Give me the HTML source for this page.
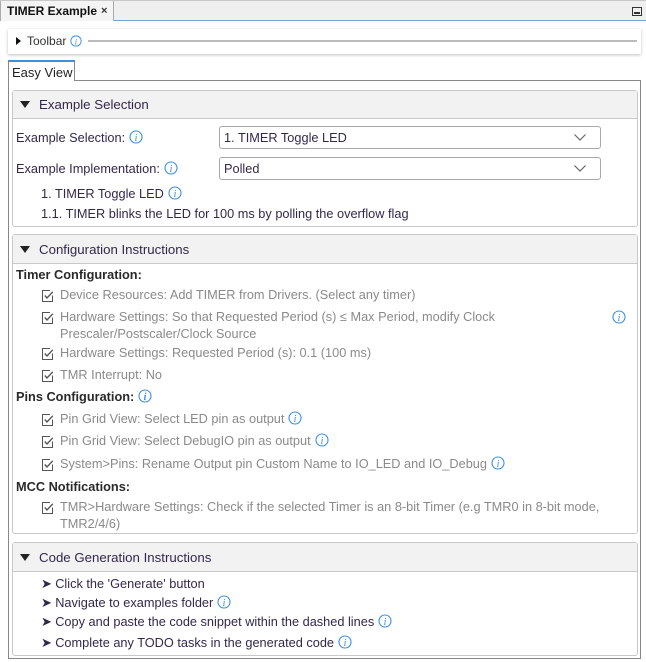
<!DOCTYPE html>
<html><head><meta charset="utf-8"><style>
*{margin:0;padding:0;box-sizing:border-box}
body{width:646px;height:662px;background:#fff;font-family:"Liberation Sans",sans-serif;font-size:12.75px;color:#33284a;position:relative;overflow:hidden}
.a{position:absolute;white-space:nowrap;line-height:16px}
.g{color:#8a8a8a}
.b{font-weight:bold;color:#2a2a2a}
.sec{position:absolute;left:12px;width:626px;border:1px solid #c8c8c8;border-radius:3px;background:#fff}
.hd{position:absolute;left:0;top:0;right:0;background:#f2f2f2;border-bottom:1px solid #c8c8c8}
.hd .t{position:absolute;left:26px;font-size:13.25px;color:#33284a;line-height:16px}
.tri{position:absolute;left:7px;width:0;height:0;border-left:5px solid transparent;border-right:5px solid transparent;border-top:7px solid #222}
.combo{position:absolute;left:219px;width:382px;height:23px;border:1px solid #a8a8a8;border-radius:3px;background:#fff}
.combo span{position:absolute;left:4px;top:3px;line-height:16px}
.combo svg{position:absolute;right:14px;top:7px}
.i{display:inline-block;vertical-align:-2px;margin-left:4px}
.cb{position:absolute;width:12px;height:12px}
</style></head><body>
<svg width="0" height="0" style="position:absolute"><defs>
<symbol id="inf" viewBox="0 0 14 14"><circle cx="7" cy="7" r="6" fill="none" stroke="#3b8fe0" stroke-width="1.1"/><text x="7" y="10.8" font-family="Liberation Serif" font-style="italic" font-size="10" fill="#3b8fe0" text-anchor="middle">i</text></symbol>
<symbol id="chk" viewBox="0 0 12 12"><path d="M10.5 5.5V11.5H0.5V0.5H8" fill="none" stroke="#555" stroke-width="1"/><path d="M2.8 5.5L5 8L10.8 1.8" fill="none" stroke="#555" stroke-width="1.4"/></symbol>
</defs></svg>

<div style="position:absolute;left:0;top:0;width:646px;height:21px;background:#efefef;border-top:1px solid #c8c8c8"></div>
<div style="position:absolute;left:0;top:20px;width:646px;height:1px;background:#7ea4cc"></div>
<div style="position:absolute;left:0;top:1px;width:114px;height:20px;background:#f4f4f4;border-right:1px solid #aaa;border-left:1px solid #aaa"></div>
<div class="a b" style="left:7px;top:3px;font-size:12px;color:#111">TIMER Example</div>
<div class="a" style="left:101px;top:3px;font-size:11px;font-weight:bold;color:#333">×</div>
<div style="position:absolute;left:632px;top:7px;width:10px;height:9px;border:1px solid #333"><div style="position:absolute;left:1px;top:4px;width:6px;height:2px;background:#333"></div></div>

<div style="position:absolute;left:8px;top:29px;width:633px;height:25px;background:#fff;box-shadow:0 1px 3px rgba(0,0,0,.25)"></div>
<div style="position:absolute;left:16px;top:37px;width:0;height:0;border-top:4px solid transparent;border-bottom:4px solid transparent;border-left:5px solid #111"></div>
<div class="a" style="left:27px;top:33px;font-size:12px;color:#333">Toolbar<svg class="i" width="12" height="12"><use href="#inf"/></svg></div>
<div style="position:absolute;left:88px;top:40px;width:549px;height:2px;background:#bbb"></div>

<div style="position:absolute;left:8px;top:80px;width:633px;height:579px;border:1px solid #888"></div>
<div style="position:absolute;left:8px;top:60px;width:67px;height:21px;background:#fff;border:1px solid #888;border-bottom:none;border-top:2px solid #3b8fe0"></div>
<div class="a" style="left:12px;top:65px;font-size:13px;color:#222">Easy View</div>

<div class="sec" style="top:90px;height:137px">
 <div class="hd" style="height:28px"><div class="tri" style="top:10px"></div><div class="t" style="top:6px">Example Selection</div></div>
</div>
<div class="a" style="left:16px;top:130px">Example Selection:<svg class="i" width="14" height="14"><use href="#inf"/></svg></div>
<div class="combo" style="top:126px"><span>1. TIMER Toggle LED</span><svg width="12" height="7"><path d="M0.5 0.5L6 6L11.5 0.5" fill="none" stroke="#666" stroke-width="1.2"/></svg></div>
<div class="a" style="left:16px;top:161px">Example Implementation:<svg class="i" width="14" height="14"><use href="#inf"/></svg></div>
<div class="combo" style="top:157px"><span>Polled</span><svg width="12" height="7"><path d="M0.5 0.5L6 6L11.5 0.5" fill="none" stroke="#666" stroke-width="1.2"/></svg></div>
<div class="a" style="left:41px;top:186px">1. TIMER Toggle LED<svg class="i" width="14" height="14"><use href="#inf"/></svg></div>
<div class="a" style="left:41px;top:206px">1.1. TIMER blinks the LED for 100 ms by polling the overflow flag</div>

<div class="sec" style="top:234px;height:300px">
 <div class="hd" style="height:29px"><div class="tri" style="top:11px"></div><div class="t" style="top:7px">Configuration Instructions</div></div>
</div>
<div class="a b" style="left:16px;top:267px">Timer Configuration:</div>
<svg class="cb" style="left:42px;top:290px"><use href="#chk"/></svg><div class="a g" style="left:60px;top:287px">Device Resources: Add TIMER from Drivers. (Select any timer)</div>
<svg class="cb" style="left:42px;top:312px"><use href="#chk"/></svg><div class="a g" style="left:60px;top:309px">Hardware Settings: So that Requested Period (s) ≤ Max Period, modify Clock</div>
<div class="a g" style="left:60px;top:326px">Prescaler/Postscaler/Clock Source</div>
<svg style="position:absolute;left:612px;top:310px" width="14" height="14"><use href="#inf"/></svg>
<svg class="cb" style="left:42px;top:348px"><use href="#chk"/></svg><div class="a g" style="left:60px;top:345px">Hardware Settings: Requested Period (s): 0.1 (100 ms)</div>
<svg class="cb" style="left:42px;top:370px"><use href="#chk"/></svg><div class="a g" style="left:60px;top:367px">TMR Interrupt: No</div>
<div class="a b" style="left:16px;top:389px">Pins Configuration:<svg class="i" width="14" height="14"><use href="#inf"/></svg></div>
<svg class="cb" style="left:42px;top:414px"><use href="#chk"/></svg><div class="a g" style="left:60px;top:411px">Pin Grid View: Select LED pin as output<svg class="i" width="14" height="14"><use href="#inf"/></svg></div>
<svg class="cb" style="left:42px;top:436px"><use href="#chk"/></svg><div class="a g" style="left:60px;top:433px">Pin Grid View: Select DebugIO pin as output<svg class="i" width="14" height="14"><use href="#inf"/></svg></div>
<svg class="cb" style="left:42px;top:459px"><use href="#chk"/></svg><div class="a g" style="left:60px;top:456px">System&gt;Pins: Rename Output pin Custom Name to IO_LED and IO_Debug<svg class="i" width="14" height="14"><use href="#inf"/></svg></div>
<div class="a b" style="left:16px;top:479px">MCC Notifications:</div>
<svg class="cb" style="left:42px;top:502px"><use href="#chk"/></svg><div class="a g" style="left:60px;top:499px">TMR&gt;Hardware Settings: Check if the selected Timer is an 8-bit Timer (e.g TMR0 in 8-bit mode,</div>
<div class="a g" style="left:60px;top:516px">TMR2/4/6)</div>

<div class="sec" style="top:542px;height:114px">
 <div class="hd" style="height:29px"><div class="tri" style="top:11px"></div><div class="t" style="top:7px">Code Generation Instructions</div></div>
</div>
<div class="a" style="left:41px;top:576px">➤ Click the 'Generate' button</div>
<div class="a" style="left:41px;top:595px">➤ Navigate to examples folder<svg class="i" width="14" height="14"><use href="#inf"/></svg></div>
<div class="a" style="left:41px;top:614px">➤ Copy and paste the code snippet within the dashed lines<svg class="i" width="14" height="14"><use href="#inf"/></svg></div>
<div class="a" style="left:41px;top:635px">➤ Complete any TODO tasks in the generated code<svg class="i" width="14" height="14"><use href="#inf"/></svg></div>
</body></html>
